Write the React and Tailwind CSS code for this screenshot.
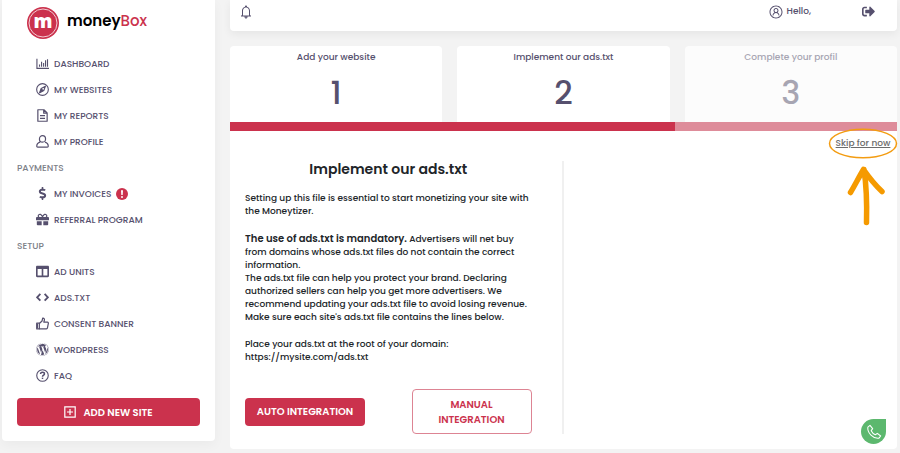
import React from 'react';
import { FaColumns, FaDollarSign, FaGift, FaSignOutAlt, FaWordpress } from 'react-icons/fa';
import { LiaBell, LiaUserCircle } from 'react-icons/lia';

const ChartIcon = ({ className }) => (
  <svg viewBox="0 0 14 14" className={className} fill="none" stroke="currentColor" strokeWidth="1.2" aria-hidden="true">
    <path d="M1 2v10.200H14M3.800 10.500V8M6 10.500V5M8.200 10.500V6.500M10.300 10.500V3.500M12.400 10.500V2.500" />
  </svg>
);

const CompassIcon = ({ className }) => (
  <svg viewBox="0 0 14 14" className={className} fill="none" stroke="currentColor" strokeWidth="1.2" strokeLinejoin="round" aria-hidden="true">
    <circle cx="7" cy="7" r="6.300" />
    <path d="M10.200 3.400 8.400 8 3.900 10.500 5.600 6z" />
    <path d="M5.600 6 8.400 8l-4.500 2.500z" fill="currentColor" strokeWidth=".4" />
  </svg>
);

const FileIcon = ({ className }) => (
  <svg viewBox="0 0 14 14" className={className} fill="none" stroke="currentColor" strokeWidth="1.300" strokeLinejoin="round" aria-hidden="true">
    <path d="M2 .8h6.500L12 4.300v8.900H2zM8.300.8v3.700H12M4.300 7.200h5.400M4.300 10h5.400" />
  </svg>
);

const UserIcon = ({ className }) => (
  <svg viewBox="0 0 14 14" className={className} fill="none" stroke="currentColor" strokeWidth="1.3" strokeLinejoin="round" aria-hidden="true">
    <ellipse cx="7" cy="4.2" rx="3.3" ry="3.5" />
    <path d="M4.400 7.700C2 8.400.8 9.700.8 12.100c0 .6.4.9 1 .9h10.400c.6 0 1-.3 1-.9 0-2.400-1.200-3.700-3.600-4.400" />
  </svg>
);

const CodeIcon = ({ className }) => (
  <svg viewBox="0 0 14 14" className={className} fill="none" stroke="currentColor" strokeWidth="2" aria-hidden="true">
    <path d="M4.700 3.200 1.200 6.800 4.700 10.400M9.300 3.200 12.800 6.800 9.300 10.400" />
  </svg>
);

const ThumbIcon = ({ className }) => (
  <svg viewBox="0 0 14 14" className={className} fill="none" stroke="currentColor" strokeWidth="1.3" strokeLinejoin="round" aria-hidden="true">
    <path d="M.8 6.500h2.800v6.300H.8z" />
    <path d="M1.400 7v5.200" strokeWidth="1.600" />
    <path d="M3.600 7 6.500 4.300 7.200 1.200c1.600-.2 2.200 1.200 1.700 2.600L8.400 5.600h4c.7 0 1 .6.900 1.200l-.9 4.700c-.1.700-.5 1.200-1.200 1.200H3.600" />
  </svg>
);

const QuestionIcon = ({ className }) => (
  <svg viewBox="0 0 14 14" className={className} fill="none" stroke="currentColor" strokeWidth="1.2" aria-hidden="true">
    <circle cx="7" cy="7" r="6.200" />
    <path d="M4.900 5.500c0-1.200.9-1.900 2.100-1.900s2.100.7 2.100 1.700c0 1.300-2.100 1.500-2.100 3.100" strokeWidth="1.600" />
    <path d="M7 9.300v1.500" strokeWidth="1.600" />
  </svg>
);

const PlusSquareIcon = ({ className }) => (
  <svg viewBox="0 0 12 12" className={className} fill="none" stroke="currentColor" strokeWidth="1.200" aria-hidden="true">
    <path d="M.8.8h10.400v10.400H.8zM6 3v6M3 6h6" />
  </svg>
);

const AlertIcon = () => (
  <svg viewBox="0 0 12 12" className="w-3 h-3 text-[#cb324d]" role="img" aria-label="Action required">
    <circle cx="6" cy="6" r="6" fill="currentColor" />
    <path d="M5 2.200h2L6.700 7H5.300z" fill="white" />
    <circle cx="6" cy="8.900" r="1" fill="white" />
  </svg>
);

const menu = [
  {
    items: [
      { label: 'DASHBOARD', icon: ChartIcon },
      { label: 'MY WEBSITES', icon: CompassIcon },
      { label: 'MY REPORTS', icon: FileIcon },
      { label: 'MY PROFILE', icon: UserIcon },
    ],
  },
  {
    title: 'PAYMENTS',
    items: [
      { label: 'MY INVOICES', icon: FaDollarSign, alert: true },
      { label: 'REFERRAL PROGRAM', icon: FaGift },
    ],
  },
  {
    title: 'SETUP',
    items: [
      { label: 'AD UNITS', icon: FaColumns },
      { label: 'ADS.TXT', icon: CodeIcon },
      { label: 'CONSENT BANNER', icon: ThumbIcon },
      { label: 'WORDPRESS', icon: FaWordpress },
      { label: 'FAQ', icon: QuestionIcon },
    ],
  },
];

const Sidebar = () => (
  <aside className="w-[213px] shrink-0 self-start bg-white rounded-b px-[15px] pb-[15px] shadow-[0_4px_12px_rgba(0,0,0,0.04)]">
    <a href="#" className="flex items-center gap-2 h-[52px] pl-[10px] pb-[7px]">
      <svg viewBox="0 0 32 32" className="w-8 h-8" aria-hidden="true">
        <circle cx="16" cy="16" r="16" fill="#cb324d" />
        <circle cx="16" cy="16" r="14" fill="none" stroke="#f3cdd4" strokeWidth="1" />
        <text x="16" y="21" textAnchor="middle" fontSize="19" fontWeight="800" fill="white" className="font-['Open_Sans',sans-serif]">m</text>
      </svg>
      <span className="text-[15px] leading-5 font-semibold text-black pb-1">
        money<span className="font-medium text-[#cb324d]">Box</span>
      </span>
    </a>
    <nav>
      {menu.map((group, i) => (
        <div key={i}>
          {group.title && (
            <h3 className="flex items-center h-[26px] text-[9px] font-medium text-[#7c8087]">{group.title}</h3>
          )}
          <ul>
            {group.items.map((item) => (
              <li key={item.label}>
                <a href="#" className="flex items-center h-[26px] pl-4 text-[9px] font-medium text-[#56506e]">
                  <span className="flex items-center justify-center w-[18px] mr-[3px] pb-[3px]">
                    <item.icon className="w-[13px] h-[13px] shrink-0" />
                  </span>
                  {item.label}
                  {item.alert && <span className="ml-[5px] pb-[3px]"><AlertIcon /></span>}
                </a>
              </li>
            ))}
          </ul>
        </div>
      ))}
    </nav>
    <button type="button" className="flex items-center justify-center gap-[7px] w-full h-7 mt-2 rounded bg-[#cb324d] text-white text-[10px] font-semibold">
      <PlusSquareIcon className="w-3 h-3" />
      ADD NEW SITE
    </button>
  </aside>
);

const Header = () => (
  <header className="flex items-center justify-between h-[31px] pl-2 pr-[22px] pb-2 bg-white rounded-b text-[#56506e] shadow-[0_3px_8px_rgba(0,0,0,0.06)]">
    <button type="button" aria-label="Notifications">
      <LiaBell className="w-4 h-4" />
    </button>
    <div className="flex items-center gap-[51px]">
      <a href="#" className="flex items-center gap-[3px] text-[9px] font-medium">
        <LiaUserCircle className="w-4 h-4" />
        Hello,
      </a>
      <button type="button" aria-label="Log out">
        <FaSignOutAlt className="w-[13px] h-[13px]" />
      </button>
    </div>
  </header>
);

const steps = [
  { number: 1, label: 'Add your website' },
  { number: 2, label: 'Implement our ads.txt' },
  { number: 3, label: 'Complete your profil', disabled: true },
];

const Steps = () => (
  <div>
    <ol className="grid grid-cols-3 gap-[15px] mt-[15px]">
      {steps.map((step) => (
        <li
          key={step.number}
          className={`flex flex-col items-center h-[76px] pt-[5px] rounded-t ${
            step.disabled ? 'bg-[#fcfcfc] text-[#a7a5b2]' : 'bg-white text-[#56506e]'
          }`}
        >
          <span className="text-[9px] leading-[13px] font-medium">{step.label}</span>
          <span className="mt-[9px] text-[32px] leading-10 font-medium">{step.number}</span>
        </li>
      ))}
    </ol>
    <div className="h-[9px] bg-[#de8c9a]">
      <div className="h-full w-2/3 bg-[#cb324d]"></div>
    </div>
  </div>
);

// "Skip for now" link with the hand-drawn circle and arrow pointing at it
const SkipLink = () => (
  <div className="absolute top-[-3px] right-[-1px] w-[70px]">
    <div className="relative flex items-center justify-center h-[31px]">
      <svg viewBox="0 0 70 31" className="absolute inset-0 w-full h-full" fill="none" aria-hidden="true">
        <ellipse cx="35" cy="15.500" rx="33.500" ry="14.300" stroke="#f39c12" strokeWidth="1.500" />
      </svg>
      <a href="#" className="relative text-[9px] font-medium text-[#6c6c6c] underline">Skip for now</a>
    </div>
    <svg viewBox="0 0 40 62" className="w-10 h-[62px] ml-[18px] mt-[5px]" fill="none" stroke="#f59a00" strokeWidth="5.500" strokeLinecap="round" strokeLinejoin="round" aria-hidden="true">
      <path d="M20.500 58.500C21 40 20.500 22 18 5.500M4.500 28.500C9 21 13 13 17.500 5.500 22 12 28 20 36 27.500" />
    </svg>
  </div>
);

const Panel = () => (
  <section className="relative h-[318px] bg-white rounded-b pt-[30px] pb-[15px]">
    <div className="w-1/2 h-full pl-[15px] pr-[30px] border-r-2 border-[#f0f0f0] text-[#212529]">
      <h1 className="text-center text-[14px] leading-4 font-semibold">Implement our ads.txt</h1>
      <div className="mt-[15px] text-[9px] leading-[13px] font-medium whitespace-nowrap">
        <p>
          Setting up this file is essential to start monetizing your site with<br />
          the Moneytizer.
        </p>
        <p className="mt-[14px]">
          <strong className="text-[10px] font-semibold">The use of ads.txt is mandatory.</strong> Advertisers will net buy<br />
          from domains whose ads.txt files do not contain the correct<br />
          information.<br />
          The ads.txt file can help you protect your brand. Declaring<br />
          authorized sellers can help you get more advertisers. We<br />
          recommend updating your ads.txt file to avoid losing revenue.<br />
          Make sure each site's ads.txt file contains the lines below.
        </p>
        <p className="mt-[14px]">
          Place your ads.txt at the root of your domain:<br />
          https://mysite.com/ads.txt
        </p>
      </div>
      <div className="flex items-center justify-between mt-[25px]">
        <button type="button" className="w-[120px] h-7 rounded bg-[#cb324d] text-white text-[10px] font-semibold">
          AUTO INTEGRATION
        </button>
        <button type="button" className="w-[120px] h-[45px] px-5 rounded border border-[#dd8493] text-[#cb324d] text-[10px] leading-[15px] font-semibold">
          MANUAL INTEGRATION
        </button>
      </div>
    </div>
    <SkipLink />
    <button type="button" aria-label="Call us" className="absolute right-[11px] bottom-[5px] flex items-center justify-center w-[25px] h-[25px] rounded-full rounded-tr-[3px] bg-[#5cb86e] text-white">
      <svg viewBox="0 0 24 24" className="w-4 h-4" fill="none" stroke="currentColor" strokeWidth="1.600" strokeLinejoin="round" aria-hidden="true">
        <path d="M6 2 2.800 4.600C1.500 13 11 22.500 19.400 21.200L22 18l-5-4-3 2.200C11.500 15 9 12.500 7.800 10L10 7z" />
      </svg>
    </button>
  </section>
);

const App = () => {
  return (
    <div className="flex gap-[15px] min-h-screen bg-[#f3f3f3] pl-[2px] pr-[3px] font-['Poppins','Inter',sans-serif]">
      <Sidebar />
      <main className="flex-1 min-w-0">
        <Header />
        <Steps />
        <Panel />
      </main>
    </div>
  );
};

export default App;
